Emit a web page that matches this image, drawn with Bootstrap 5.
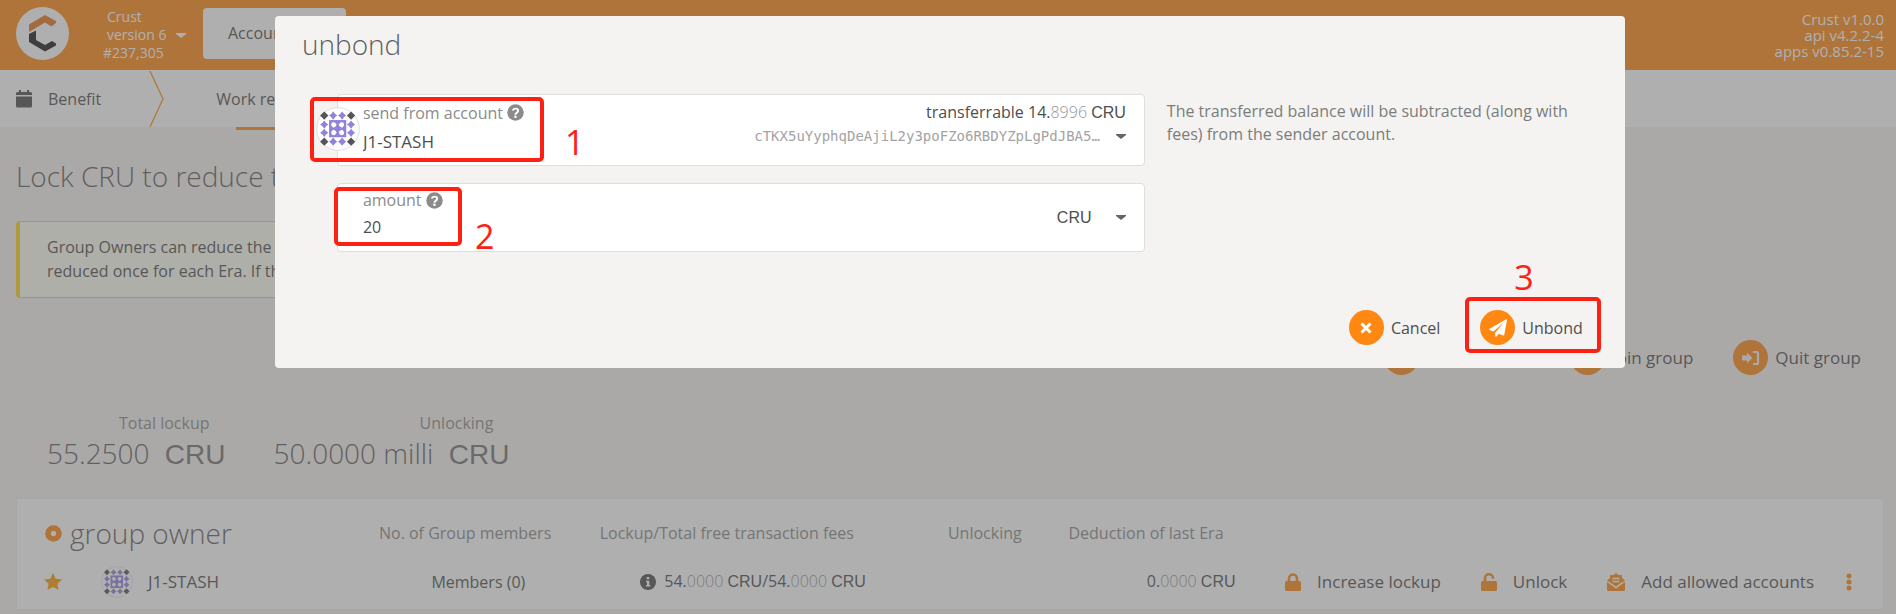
<!DOCTYPE html>
<html lang="en">
<head>
<meta charset="utf-8">
<meta name="viewport" content="width=device-width, initial-scale=1">
<title>Crust Benefit</title>
<link href="https://cdn.jsdelivr.net/npm/bootstrap@5.3.0/dist/css/bootstrap.min.css" rel="stylesheet">
<style>
  :root { --brand: #ff8812; --ink: #4e4e4e; --soft: #8b8b8b; --ann: #ff2014; }
  body { font-family: "Open Sans", "Noto Sans", sans-serif; font-size: 16px; line-height: 24px; color: var(--ink); background: #f4f3f1; min-height: 100vh; overflow-x: hidden; }
  svg { display: block; flex: none; }
  .topbar { background: var(--brand); height: 70px; color: #fff; font-size: 14px; line-height: 18px; }
  .chain { width: 64px; margin-left: 34px; }
  .api-info { font-size: 15px; line-height: 16px; }
  .acct-btn { background: #fff; width: 143px; height: 51px; margin-left: 16px; padding: 0 24px; text-align: left; color: var(--ink); border-radius: 4px; }
  .acct-btn:hover { background: #fff; }
  .tabs { background: #fff; height: 57px; }
  .tabs a { color: var(--ink); text-decoration: none; height: 57px; }
  .tab-work { margin-left: 52px; position: relative; }
  .tab-work::after { content: ""; position: absolute; left: 20px; top: 57px; width: 90px; height: 3px; background: var(--brand); }
  .thin { font-weight: 300; font-size: 28px; line-height: 36px; color: #5f5f5f; }
  .page-title { padding-top: 31px; }
  .notice { width: 60%; background: #fffff2; border: 1px solid #ffd31a; border-left-width: 4px; border-radius: 4px; margin-top: 27px; padding: 13px 27px 14px; }
  .act { display: inline-flex; align-items: center; gap: 7px; border: 0; background: none; padding: 0; color: var(--ink); white-space: nowrap; }
  main .act { font-size: 17px; }
  .disc { width: 35px; height: 35px; border-radius: 50%; background: var(--brand); display: flex; align-items: center; justify-content: center; }
  .group-acts { margin-top: 42px; gap: 40px; padding-right: 23px; }
  .unit { font-family: "Liberation Sans", sans-serif; }
  .frac { font-weight: 300; opacity: .6; }
  .soft { color: var(--soft); }
  .stats { padding: 36px 0 0 31px; }
  .stat { text-align: right; }
  .stat .soft { padding-right: 16px; }
  .stat .unit { opacity: .85; }
  .owner-name { font-size: 17px; gap: 15px; }
  .owners { background: #fff; border: 1px solid #eeecea; table-layout: fixed; width: 100%; margin-top: 25px; }
  .owners th { font-weight: 400; color: var(--soft); text-align: right; padding: 13px 16px 0; height: 56px; white-space: nowrap; }
  .owners th.inset { padding-right: 27px; }
  .owners td { height: 55px; text-align: right; padding: 0 15px; white-space: nowrap; border-bottom: 1px solid #eeecea; }
  .owners td.members { padding-right: 42px; }
  .shade { position: fixed; inset: 0; background: rgba(96,96,96,.5); }
  .modal-dialog.send { max-width: none; width: 71.2%; margin: 16px 0 0 14.5%; }
  .send .modal-content { background: #f4f3f1; border: 0; border-radius: 4px; padding: 10px 24px 23px 27px; color: var(--ink); }
  .fields { width: 62.2%; margin-left: 35px; }
  .field { background: #fff; border: 1px solid #dededd; border-radius: 4px; position: relative; padding: 5px 18px 0 25px; }
  .field-acct { height: 72px; margin-bottom: 17px; }
  .field-amt { height: 69px; }
  .field input, .field select { border: 0; padding: 0; background: none; color: var(--ink); outline: 0; appearance: none; }
  .field label + input { margin-top: 3px; }
  #acct { font-size: 17px; padding-top: 5px; }
  .addr { font-family: "DejaVu Sans Mono", monospace; font-size: 14px; color: #a3a3a3; line-height: 22px; }
  .ident { position: absolute; left: -22px; top: 12px; }
  .ring { position: absolute; border: 4px solid var(--ann); border-radius: 5px; pointer-events: none; }
  .num { position: absolute; color: var(--ann); font-size: 34px; line-height: 36px; }
  .ring-a { left: -28px; top: 2px; width: 234px; height: 65px; }
  .num-a { left: 227px; top: 29px; }
  .ring-b { left: -4px; top: 3px; width: 128px; height: 59px; }
  .num-b { left: 137px; top: 34px; }
  .ring-c { left: -15px; right: -18px; top: -13px; height: 56px; }
  .num-c { left: 34px; top: -51px; }
  .help { line-height: 23px; color: #7c7c7c; margin: 0 22px; padding-top: 6px; }
  .dlg-acts { margin-top: 58px; gap: 40px; padding-right: 18px; }
</style>
<script src="https://cdn.jsdelivr.net/npm/bootstrap@5.3.0/dist/js/bootstrap.bundle.min.js"></script>
</head>
<body>
<svg width="0" height="0" class="position-absolute" aria-hidden="true">
  <defs>
    <g id="identicon">
      <circle cx="32" cy="32" r="31" fill="#fff" stroke="#ddd" stroke-width="1.4"/>
      <g fill="#9083da">
        <path id="dia" d="M25 6.5q3 4.500 6 6q-3 1.500-6 6q-3-4.500-6-6q3-1.500 6-6z"/>
        <use href="#dia" x="13"/><use href="#dia" y="38"/><use href="#dia" x="13" y="38"/>
        <use href="#dia" x="-13" y="13"/><use href="#dia" x="-13" y="25"/>
        <use href="#dia" x="26" y="13"/><use href="#dia" x="26" y="25"/>
        <path d="M19 19h25v25H19z"/>
        <path fill="#fff" d="M27 22l3 3.500-1.500 3-3.500 1.500-3-3.500 1-4zM36 22l4 .5 1 4-3 3.500-3.500-1.500-1.500-3zM27 41l-4-.5-1-4 3-3.500 3.500 1.500 1.500 3zM36 41l-3-3.500 1.500-3 3.500-1.500 3 3.500-1 4z"/>
      </g>
      <g fill="#555"><path id="dk" d="M12 6.500l6 6-6 6-6-6z"/><use href="#dk" x="39"/><use href="#dk" y="38"/><use href="#dk" x="39" y="38"/></g>
    </g>
    <path id="caret" d="M0 1h10v1L5 6 0 2z"/>
    <g id="help"><circle cx="256" cy="256" r="248" fill="#8b8b8b"/><path fill="none" stroke="#fff" stroke-width="58" d="M172 196c22-78 164-76 162 10 0 58-78 60-80 116"/><circle cx="254" cy="384" r="40" fill="#fff"/></g>
    <g id="signin"><path d="M5 6.500V3.800L10.500 9 5 14.200V11.500H0v-5z"/><path fill="none" stroke="#f4f3f1" stroke-width="2.200" d="M11 3h3.500q1.500 0 1.500 1.500v9q0 1.500-1.500 1.500H11"/></g>
  </defs>
</svg>

<header class="topbar d-flex align-items-center ps-3 pe-2">
  <svg width="53" height="53" viewBox="0 0 53 53" class="mb-1"><circle cx="26.500" cy="26.500" r="26.500" fill="#fff"/><path fill="#e87722" d="M13 17.500L29 8l11 6v2l-4.500 3.500-6.500-4L13 25z"/><path fill="#1c1c1c" d="M13 27l7-3.500v9.500l9 5 7-4 4 2.500v2L29 44.500 13 35z"/></svg>
  <div class="chain"><div class="ps-1">Crust</div><div class="ps-1 text-nowrap">version 6</div><div>#237,305</div></div>
  <svg width="12" height="7" viewBox="0 0 10 7" class="ms-2" fill="#fff"><use href="#caret"/></svg>
  <button class="btn acct-btn mb-1" type="button">Accounts</button>
  <div class="api-info ms-auto text-end pe-1 mb-0">Crust v1.0.0<br>api v4.2.2-4<br>apps v0.85.2-15</div>
</header>

<nav class="tabs d-flex">
  <a href="#" class="d-flex align-items-center ps-3">
    <svg width="16" height="18" viewBox="0 0 16 18" fill="#4e4e4e"><path d="M3 0h2v2h6V0h2v2h1.500Q16 2 16 3.500V5H0V3.500Q0 2 1.500 2H3zM0 6.500h16v9.500q0 1.500-1.500 1.500h-13Q0 17.500 0 16z"/></svg>
    <span class="ms-3">Benefit</span>
  </a>
  <svg width="15" height="57" viewBox="0 0 15 57" class="ms-5" fill="none" stroke="#ff8812" stroke-width="1.200"><path d="M1 1l13 28L1 57"/></svg>
  <div class="tab-work"><a href="#" class="d-flex align-items-center text-nowrap">Work report</a></div>
</nav>

<main class="ps-3 pe-2">
  <div class="pe-1">
  <h1 class="thin mb-0 page-title">Lock CRU to reduce transaction fees</h1>
  <div class="notice">Group Owners can reduce the transaction fees by locking CRU, and the fees can be<br>reduced once for each Era. If the lockup is not enough, the fees are not reduced.</div>
  <div class="d-flex justify-content-end group-acts">
    <button class="act" type="button"><span class="disc"></span>Create group</button>
    <button class="act" type="button"><span class="disc"></span>Join group</button>
    <button class="act" type="button"><span class="disc"><svg width="18" height="18" viewBox="0 0 18 18" fill="#f4f3f1"><use href="#signin"/></svg></span>Quit group</button>
  </div>
  <div class="d-flex stats">
    <div class="stat"><div class="soft">Total lockup</div><div class="thin">55.2500 <span class="unit ms-2">CRU</span></div></div>
    <div class="stat ms-5"><div class="soft">Unlocking</div><div class="thin">50.0000 milli <span class="unit ms-2">CRU</span></div></div>
  </div>
  <table class="owners">
    <colgroup><col style="width:17.600%"><col style="width:11.900%"><col style="width:16.800%"><col style="width:8.400%"><col style="width:11.400%"><col></colgroup>
    <thead><tr>
      <th class="text-start ps-4"><span class="d-flex align-items-center gap-2 ps-1"><svg width="17" height="17" viewBox="0 0 17 17"><circle cx="8.500" cy="8.500" r="5.500" fill="none" stroke="#ff8812" stroke-width="5.600"/></svg><span class="thin">group owner</span></span></th>
      <th>No. of Group members</th><th class="inset">Lockup/Total free transaction fees</th><th>Unlocking</th><th class="inset">Deduction of last Era</th><th></th>
    </tr></thead>
    <tbody><tr>
      <td><span class="d-flex align-items-center ps-2 ms-1 owner-name">
        <svg width="18" height="18" viewBox="0 0 18 18" fill="#ff9800"><path d="M9 0l2.700 5.700 6.300.8-4.600 4.300 1.200 6.200L9 14l-5.600 3 1.200-6.200L0 6.500l6.300-.8z"/></svg>
        <svg width="32" height="32" viewBox="0 0 64 64" class="ms-4"><use href="#identicon"/></svg>J1-STASH</span></td>
      <td class="members">Members (0)</td>
      <td><span class="d-flex align-items-center justify-content-end"><svg width="16" height="16" viewBox="0 0 16 16" class="me-2"><circle cx="8" cy="8" r="8" fill="#4e4e4e"/><path fill="#fff" d="M6.700 3h2.600v2.300H6.700zM6 6.800h3.300v4.200h1V12.500H6V11h1V8.300H6z"/></svg><span>54.<span class="frac">0000</span> <span class="unit">CRU</span>/54.<span class="frac">0000</span> <span class="unit">CRU</span></span></span></td>
      <td></td>
      <td>0.<span class="frac">0000</span> <span class="unit">CRU</span></td>
      <td><span class="d-flex justify-content-end gap-4 pe-3">
        <button class="act gap-3" type="button"><svg width="16" height="18" viewBox="0 0 16 18"><rect y="8" width="16" height="10" rx="1.500" fill="#ff8812"/><path d="M4 9V5.500a4 4 0 018 0V9" fill="none" stroke="#ff8812" stroke-width="2.600"/></svg>Increase lockup</button>
        <button class="act gap-3 ms-3" type="button"><svg width="16" height="18" viewBox="0 0 16 18"><rect y="8" width="16" height="10" rx="1.500" fill="#ff8812"/><path d="M4 9V5a4 3.700 0 018 0v.8" fill="none" stroke="#ff8812" stroke-width="2.600"/></svg>Unlock</button>
        <button class="act gap-3 ms-3" type="button"><svg width="18" height="18" viewBox="0 0 18 18"><path fill="#ff8812" d="M0 9l9 6.500L18 9v7.500q0 1.500-1.500 1.500h-15Q0 18 0 16.500zM0 7.500L3 5V3q0-1 1-1h2.500L9 0l2.500 2H14q1 0 1 1v2l3 2.500L15 10V9L9 13.500 3 9.500z"/><path stroke="#fff" stroke-width="1.500" d="M5.500 5.500h7M5.500 8.500h7"/></svg>Add allowed accounts</button>
        <button class="act ms-2" type="button" aria-label="More"><svg width="6" height="18" viewBox="0 0 6 18" fill="#ff8812"><circle cx="3" cy="3" r="2.500"/><circle cx="3" cy="9" r="2.500"/><circle cx="3" cy="15" r="2.500"/></svg></button>
      </span></td>
    </tr></tbody>
  </table>
  </div>
</main>

<div class="shade"></div>
<div class="modal d-block" role="dialog" aria-labelledby="dlg">
  <div class="modal-dialog send">
    <div class="modal-content">
      <h2 class="thin mb-4 pb-2" id="dlg">unbond</h2>
      <div class="d-flex">
        <div class="fields flex-shrink-0">
          <div class="field field-acct">
            <svg class="ident" width="44" height="44" viewBox="0 0 64 64"><use href="#identicon"/></svg>
            <div class="d-flex justify-content-between">
              <label for="acct" class="soft d-flex align-items-center gap-1">send from account <svg width="17" height="17" viewBox="0 0 512 512"><use href="#help"/></svg></label>
              <div>transferrable 14.<span class="frac">8996</span> <span class="unit">CRU</span></div>
            </div>
            <div class="d-flex align-items-start">
              <input id="acct" class="flex-grow-1" value="J1-STASH">
              <span class="addr">cTKX5uYyphqDeAjiL2y3poFZo6RBDYZpLgPdJBA5…</span>
              <svg width="10" height="7" viewBox="0 0 10 7" class="ms-3 mt-2" fill="#666"><use href="#caret"/></svg>
            </div>
            <span class="ring ring-a"></span><span class="num num-a">1</span>
          </div>
          <div class="field field-amt d-flex align-items-center pt-0">
            <div class="flex-grow-1 pb-2">
              <label for="amt" class="soft d-flex align-items-center gap-1">amount <svg width="17" height="17" viewBox="0 0 512 512"><use href="#help"/></svg></label>
              <input id="amt" class="d-block" size="6" value="20">
            </div>
            <select class="unit" aria-label="Unit"><option>CRU</option></select>
            <svg width="10" height="7" viewBox="0 0 10 7" class="ms-4" fill="#666"><use href="#caret"/></svg>
            <span class="ring ring-b"></span><span class="num num-b">2</span>
          </div>
        </div>
        <p class="help">The transferred balance will be subtracted (along with fees) from the sender account.</p>
      </div>
      <div class="d-flex justify-content-end dlg-acts">
        <button class="act" type="button"><span class="disc"><svg width="12" height="12" viewBox="0 0 12 12"><path stroke="#fff" stroke-width="3" d="M1.500 1.500l9 9M10.500 1.500l-9 9"/></svg></span>Cancel</button>
        <button class="act position-relative" type="button"><span class="disc"><svg width="18" height="18" viewBox="0 0 18 18" fill="#fff"><path d="M17.300.2L.6 9.800q-1 .7 0 1.200L4.400 12.600 14.800 3.500 6.200 13.800V17q.3 1.300 1.300.4l2.300-2.700 4.400 1.800q.8.200 1-.6L18 1Q18.100 0 17.300.2z"/></svg></span>Unbond<span class="ring ring-c"></span><span class="num num-c">3</span></button>
      </div>
    </div>
  </div>
</div>
</body>
</html>
